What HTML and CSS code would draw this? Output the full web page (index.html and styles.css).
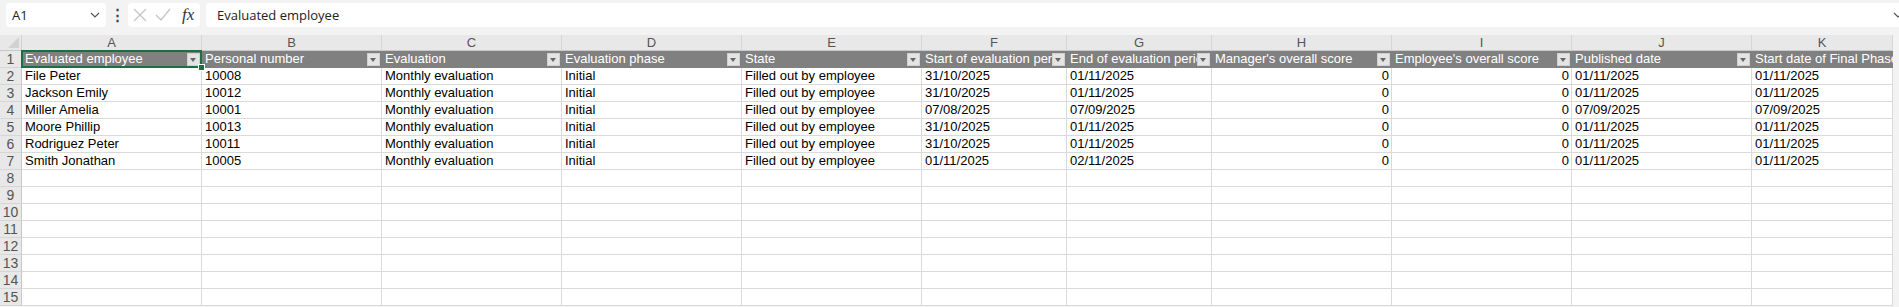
FILE: index.html
```html
<!DOCTYPE html>
<html lang="en">
<head>
    <meta charset="UTF-8">
    <meta name="viewport" content="width=device-width, initial-scale=1.0">
    <title>Evaluations</title>
    <link rel="stylesheet" href="styles.css">
</head>
<body>
    <div class="formula-bar">
        <div class="name-box">
            <span>A1</span>
            <svg class="chevron" width="10" height="6" viewBox="0 0 10 6"><path d="M1 1l4 4 4-4" fill="none" stroke="#555" stroke-width="1.2"/></svg>
        </div>
        <div class="bar-dots">&#8942;</div>
        <div class="fx-box">
            <svg width="14" height="14" viewBox="0 0 14 14"><path d="M1 1l12 12M13 1L1 13" stroke="#c4c4c4" stroke-width="1.2"/></svg>
            <svg width="16" height="14" viewBox="0 0 16 14"><path d="M1 7l5 5L15 1" fill="none" stroke="#c4c4c4" stroke-width="1.2"/></svg>
            <span class="fx">fx</span>
        </div>
        <div class="formula-input">
            <span>Evaluated employee</span>
            <svg class="chevron" width="10" height="6" viewBox="0 0 10 6"><path d="M1 1l4 4 4-4" fill="none" stroke="#555" stroke-width="1.2"/></svg>
        </div>
    </div>

    <div class="sheet">
        <div class="corner"></div>
        <div class="col-head">A</div>
        <div class="col-head">B</div>
        <div class="col-head">C</div>
        <div class="col-head">D</div>
        <div class="col-head">E</div>
        <div class="col-head">F</div>
        <div class="col-head">G</div>
        <div class="col-head">H</div>
        <div class="col-head">I</div>
        <div class="col-head">J</div>
        <div class="col-head">K</div>

        <div class="row-head">1</div>
        <div class="cell head active"><span>Evaluated employee</span><i class="filter"></i></div>
        <div class="cell head"><span>Personal number</span><i class="filter"></i></div>
        <div class="cell head"><span>Evaluation</span><i class="filter"></i></div>
        <div class="cell head"><span>Evaluation phase</span><i class="filter"></i></div>
        <div class="cell head"><span>State</span><i class="filter"></i></div>
        <div class="cell head"><span>Start of evaluation period</span><i class="filter"></i></div>
        <div class="cell head"><span>End of evaluation period</span><i class="filter"></i></div>
        <div class="cell head"><span>Manager's overall score</span><i class="filter"></i></div>
        <div class="cell head"><span>Employee's overall score</span><i class="filter"></i></div>
        <div class="cell head"><span>Published date</span><i class="filter"></i></div>
        <div class="cell head last"><span>Start date of Final Phase</span></div>

        <div class="row-head">2</div>
        <div class="cell">File Peter</div>
        <div class="cell">10008</div>
        <div class="cell">Monthly evaluation</div>
        <div class="cell">Initial</div>
        <div class="cell">Filled out by employee</div>
        <div class="cell">31/10/2025</div>
        <div class="cell">01/11/2025</div>
        <div class="cell num">0</div>
        <div class="cell num">0</div>
        <div class="cell">01/11/2025</div>
        <div class="cell">01/11/2025</div>

        <div class="row-head">3</div>
        <div class="cell">Jackson Emily</div>
        <div class="cell">10012</div>
        <div class="cell">Monthly evaluation</div>
        <div class="cell">Initial</div>
        <div class="cell">Filled out by employee</div>
        <div class="cell">31/10/2025</div>
        <div class="cell">01/11/2025</div>
        <div class="cell num">0</div>
        <div class="cell num">0</div>
        <div class="cell">01/11/2025</div>
        <div class="cell">01/11/2025</div>

        <div class="row-head">4</div>
        <div class="cell">Miller Amelia</div>
        <div class="cell">10001</div>
        <div class="cell">Monthly evaluation</div>
        <div class="cell">Initial</div>
        <div class="cell">Filled out by employee</div>
        <div class="cell">07/08/2025</div>
        <div class="cell">07/09/2025</div>
        <div class="cell num">0</div>
        <div class="cell num">0</div>
        <div class="cell">07/09/2025</div>
        <div class="cell">07/09/2025</div>

        <div class="row-head">5</div>
        <div class="cell">Moore Phillip</div>
        <div class="cell">10013</div>
        <div class="cell">Monthly evaluation</div>
        <div class="cell">Initial</div>
        <div class="cell">Filled out by employee</div>
        <div class="cell">31/10/2025</div>
        <div class="cell">01/11/2025</div>
        <div class="cell num">0</div>
        <div class="cell num">0</div>
        <div class="cell">01/11/2025</div>
        <div class="cell">01/11/2025</div>

        <div class="row-head">6</div>
        <div class="cell">Rodriguez Peter</div>
        <div class="cell">10011</div>
        <div class="cell">Monthly evaluation</div>
        <div class="cell">Initial</div>
        <div class="cell">Filled out by employee</div>
        <div class="cell">31/10/2025</div>
        <div class="cell">01/11/2025</div>
        <div class="cell num">0</div>
        <div class="cell num">0</div>
        <div class="cell">01/11/2025</div>
        <div class="cell">01/11/2025</div>

        <div class="row-head">7</div>
        <div class="cell">Smith Jonathan</div>
        <div class="cell">10005</div>
        <div class="cell">Monthly evaluation</div>
        <div class="cell">Initial</div>
        <div class="cell">Filled out by employee</div>
        <div class="cell">01/11/2025</div>
        <div class="cell">02/11/2025</div>
        <div class="cell num">0</div>
        <div class="cell num">0</div>
        <div class="cell">01/11/2025</div>
        <div class="cell">01/11/2025</div>
    </div>

    <script>
        // empty rows 8..15
        const sheet = document.querySelector('.sheet');
        for (let r = 8; r <= 15; r++) {
            const head = document.createElement('div');
            head.className = 'row-head';
            head.textContent = r;
            sheet.appendChild(head);
            for (let c = 0; c < 11; c++) {
                const cell = document.createElement('div');
                cell.className = 'cell';
                sheet.appendChild(cell);
            }
        }
    </script>
</body>
</html>
```

FILE: styles.css
```css
body {
    margin: 0;
    background-color: #f3f3f3;
    font-family: "Liberation Sans", Arial, sans-serif;
    overflow: hidden;
}

/* formula bar */
.formula-bar {
    display: flex;
    align-items: center;
    height: 35px;
    padding: 0 0 5px 6px;
    box-sizing: border-box;
}

.name-box,
.fx-box,
.formula-input {
    height: 24px;
    background-color: #fff;
    border-radius: 4px;
    box-sizing: border-box;
    display: flex;
    align-items: center;
}

.name-box {
    width: 100px;
    padding: 0 6px;
    justify-content: space-between;
    font-family: "Open Sans", sans-serif;
    font-size: 13px;
    color: #222;
}

.bar-dots {
    width: 22px;
    text-align: center;
    font-size: 15px;
    font-weight: bold;
    color: #444;
}

.fx-box {
    width: 72px;
    padding: 0 5px;
    gap: 8px;
}

.fx {
    font-family: "Liberation Serif", serif;
    font-style: italic;
    font-size: 17px;
    color: #333;
    margin-left: 3px;
}

.formula-input {
    flex: 1;
    margin-left: 6px;
    padding-left: 11px;
    justify-content: space-between;
    font-family: "Open Sans", sans-serif;
    font-size: 13px;
    color: #222;
    border-radius: 4px 0 0 4px;
}

.formula-input .chevron {
    margin-right: -4px;
}

/* sheet grid */
.sheet {
    display: grid;
    grid-template-columns: 22px repeat(5, 180px) 145px 145px repeat(3, 180px) 141px;
    grid-template-rows: 16px;
    grid-auto-rows: 17px;
    background-color: #fff;
    width: 1893px;
    font-size: 13px;
}

.corner,
.col-head,
.row-head {
    background-color: #e8e8e8;
    color: #555;
    box-sizing: border-box;
}

.corner {
    position: relative;
    border-right: 1px solid #d0d0d0;
    border-bottom: 1px solid #c8c8c8;
}

.corner::after {
    content: "";
    position: absolute;
    right: 2px;
    bottom: 2px;
    border-style: solid;
    border-width: 0 0 11px 11px;
    border-color: transparent transparent #d2d2d2 transparent;
}

.col-head {
    text-align: center;
    line-height: 16px;
    border-right: 1px solid #d6d6d6;
    border-bottom: 1px solid #c8c8c8;
}

.row-head {
    text-align: center;
    line-height: 16px;
    border-right: 1px solid #c8c8c8;
    border-bottom: 1px solid #d6d6d6;
    font-size: 14px;
}

.cell {
    box-sizing: border-box;
    border-right: 1px solid #dadada;
    border-bottom: 1px solid #dadada;
    padding: 0 3px;
    line-height: 16px;
    white-space: nowrap;
    overflow: hidden;
    color: #000;
}

.cell.num {
    text-align: right;
    padding-right: 2px;
}

.cell.head {
    display: flex;
    align-items: center;
    background-color: #808080;
    border-color: #808080;
    color: #fff;
    padding-right: 1px;
}

.cell.head span {
    flex: 1;
    overflow: hidden;
}

.cell.head.last {
    padding-right: 0;
    border-right: none;
}

.filter {
    flex: none;
    width: 13px;
    height: 13px;
    background-color: #e4e4e4;
    border: 1px solid #d0d0d0;
    box-sizing: border-box;
    position: relative;
}

.filter::after {
    content: "";
    position: absolute;
    left: 2px;
    top: 4px;
    border-style: solid;
    border-width: 4px 3.5px 0 3.5px;
    border-color: #666 transparent transparent transparent;
}

.cell.active {
    position: relative;
    overflow: visible;
}

.cell.active::before {
    content: "";
    position: absolute;
    left: -1px;
    top: -1px;
    right: -1px;
    bottom: -1px;
    border: 2px solid #1e6e42;
}

.cell.active::after {
    content: "";
    position: absolute;
    right: -4px;
    bottom: -4px;
    width: 5px;
    height: 5px;
    background-color: #1e6e42;
    border: 1px solid #fff;
    z-index: 1;
}
```
